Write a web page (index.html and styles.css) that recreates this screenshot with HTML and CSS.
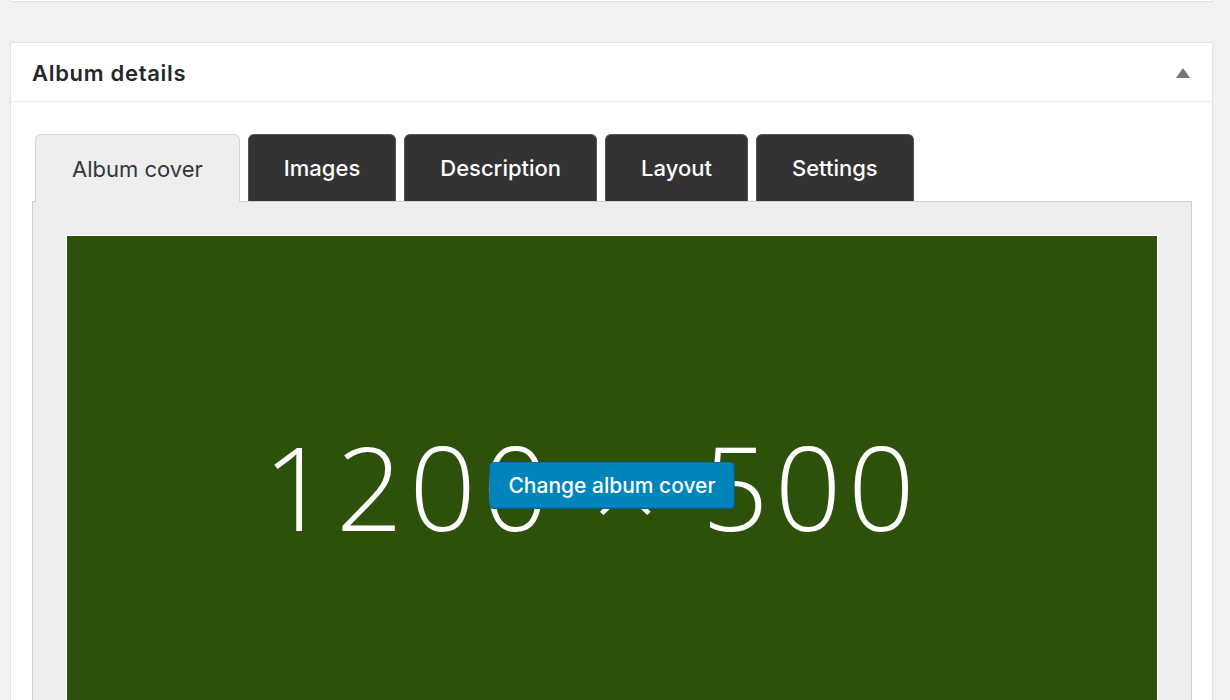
FILE: index.html
```html
<!DOCTYPE html>
<html>
<head>
<meta charset="utf-8">
<link rel="stylesheet" href="styles.css">
</head>
<body>
<div class="prev-box"></div>
<div class="postbox">
  <div class="postbox-header">
    <h2 class="postbox-title">Album details</h2>
    <span class="toggle-arrow"></span>
  </div>
  <div class="postbox-inside">
    <div class="tabs">
      <div class="tab tab-active">Album cover</div>
      <div class="tab">Images</div>
      <div class="tab">Description</div>
      <div class="tab">Layout</div>
      <div class="tab">Settings</div>
    </div>
    <div class="tab-panel">
      <div class="cover">
        <div class="cover-text">1200 × 500</div>
        <button class="cover-button">Change album cover</button>
      </div>
    </div>
  </div>
</div>
</body>
</html>
```
FILE: styles.css
```css
html, body {
  margin: 0;
  padding: 0;
  background: #f1f1f1;
  font-family: Inter, "Liberation Sans", Arial, sans-serif;
  overflow: hidden;
}
.prev-box {
  margin-left: 10px;
  width: 1201px;
  height: 1px;
  background: #fff;
  border: 1px solid #e0e0e0;
  border-top: none;
}
.postbox {
  margin: 40px 0 0 10px;
  width: 1201px;
  background: #fff;
  border: 1px solid #e3e3e3;
}
.postbox-header {
  height: 58px;
  border-bottom: 1px solid #eeeeee;
  display: flex;
  align-items: center;
  justify-content: space-between;
  padding: 0 22px 0 21px;
}
.postbox-title {
  margin: 0;
  font-size: 22px;
  font-weight: 600;
  letter-spacing: 0.7px;
  color: #23282d;
  margin-top: 1px;
}
.toggle-arrow {
  width: 0;
  height: 0;
  border-left: 7px solid transparent;
  border-right: 7px solid transparent;
  border-bottom: 10px solid #72777c;
  margin-top: 2px;
}
.postbox-inside {
  padding: 32px 20px 0 21px;
}
.tabs {
  display: flex;
  gap: 8px;
  padding-left: 3px;
  position: relative;
  z-index: 1;
}
.tab {
  height: 66px;
  padding: 0 35px;
  display: flex;
  align-items: center;
  font-size: 22px;
  color: #fff;
  background: #333;
  border: 1px solid #555;
  border-bottom: none;
  border-radius: 6px 6px 0 0;
  font-weight: 500;
}
.tab-active {
  background: #eeeeee;
  color: #32373c;
  border-color: #d4d4d4;
  font-weight: 400;
  height: 67px;
  margin-bottom: -1px;
  padding: 0 36px;
}
.tab-panel {
  border: 1px solid #cfcfcf;
  background: #ededed;
  padding: 33px 33px 0;
}
.cover {
  height: 498px;
  background: #2d510a;
  border: 1px solid #fff;
  display: flex;
  align-items: center;
  justify-content: center;
  position: relative;
}
.cover-text {
  font-family: "Open Sans", sans-serif;
  font-weight: 300;
  font-size: 117px;
  letter-spacing: 6.3px;
  color: #fff;
  margin-left: -40px;
  margin-top: 0;
}
.cover-button {
  position: absolute;
  left: 50%;
  top: 50%;
  transform: translate(-50%, -50%);
  background: #0085ba;
  border: 1px solid #0073aa;
  border-radius: 4px;
  color: #fff;
  font-family: Inter, "Liberation Sans", Arial, sans-serif;
  font-weight: 500;
  font-size: 21px;
  padding: 0 18px;
  height: 46px;
  box-shadow: 0 1px 0 #006799;
}
```
